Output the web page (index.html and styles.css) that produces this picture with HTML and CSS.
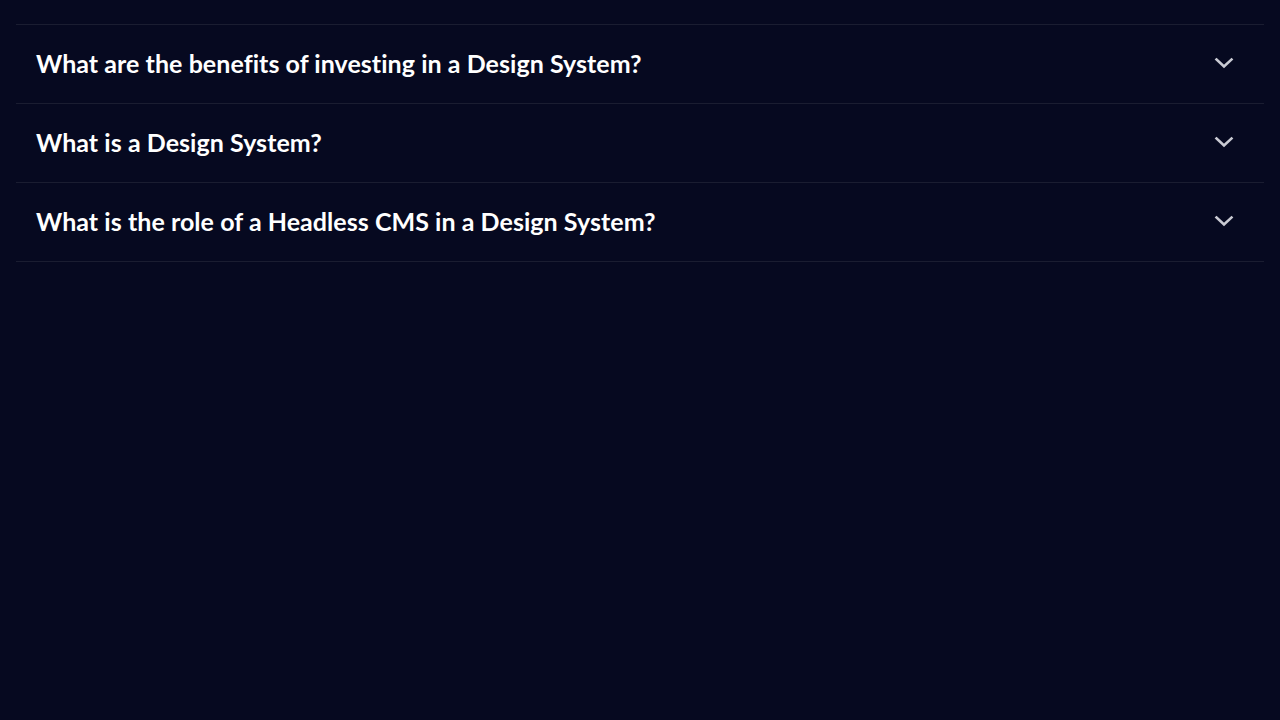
FILE: index.html
```html
<!DOCTYPE html>
<html lang="en">
<head>
<meta charset="utf-8">
<link rel="stylesheet" href="styles.css">
</head>
<body>
<div class="faq">
  <div class="item">
    <span class="q">What are the benefits of investing in a Design System?</span>
    <svg class="chev" width="20" height="12" viewBox="0 0 20 12"><path d="M2.5 2.5 L10 9.5 L17.5 2.5" fill="none" stroke="#c9cad3" stroke-width="2.6" stroke-linecap="square"/></svg>
  </div>
  <div class="item">
    <span class="q">What is a Design System?</span>
    <svg class="chev" width="20" height="12" viewBox="0 0 20 12"><path d="M2.5 2.5 L10 9.5 L17.5 2.5" fill="none" stroke="#c9cad3" stroke-width="2.6" stroke-linecap="square"/></svg>
  </div>
  <div class="item">
    <span class="q">What is the role of a Headless CMS in a Design System?</span>
    <svg class="chev" width="20" height="12" viewBox="0 0 20 12"><path d="M2.5 2.5 L10 9.5 L17.5 2.5" fill="none" stroke="#c9cad3" stroke-width="2.6" stroke-linecap="square"/></svg>
  </div>
</div>
</body>
</html>
```

FILE: styles.css
```css
html, body {
  margin: 0;
  padding: 0;
  background: #060920;
  height: 100%;
}
.faq {
  padding: 24px 16px 0;
}
.item {
  display: flex;
  align-items: center;
  justify-content: space-between;
  height: 78px;
  padding: 0 30px 0 20px;
  border-top: 1px solid #1a1d31;
}
.item:last-child {
  border-bottom: 1px solid #1a1d31;
}
.q {
  font-family: Lato, "Noto Sans", sans-serif;
  font-weight: 700;
  font-size: 25px;
  line-height: 30px;
  color: #ffffff;
  letter-spacing: 0.05px;
  padding-bottom: 3px;
}
.chev {
  display: block;
  margin-top: -3px;
  margin-right: 0;
}
```
